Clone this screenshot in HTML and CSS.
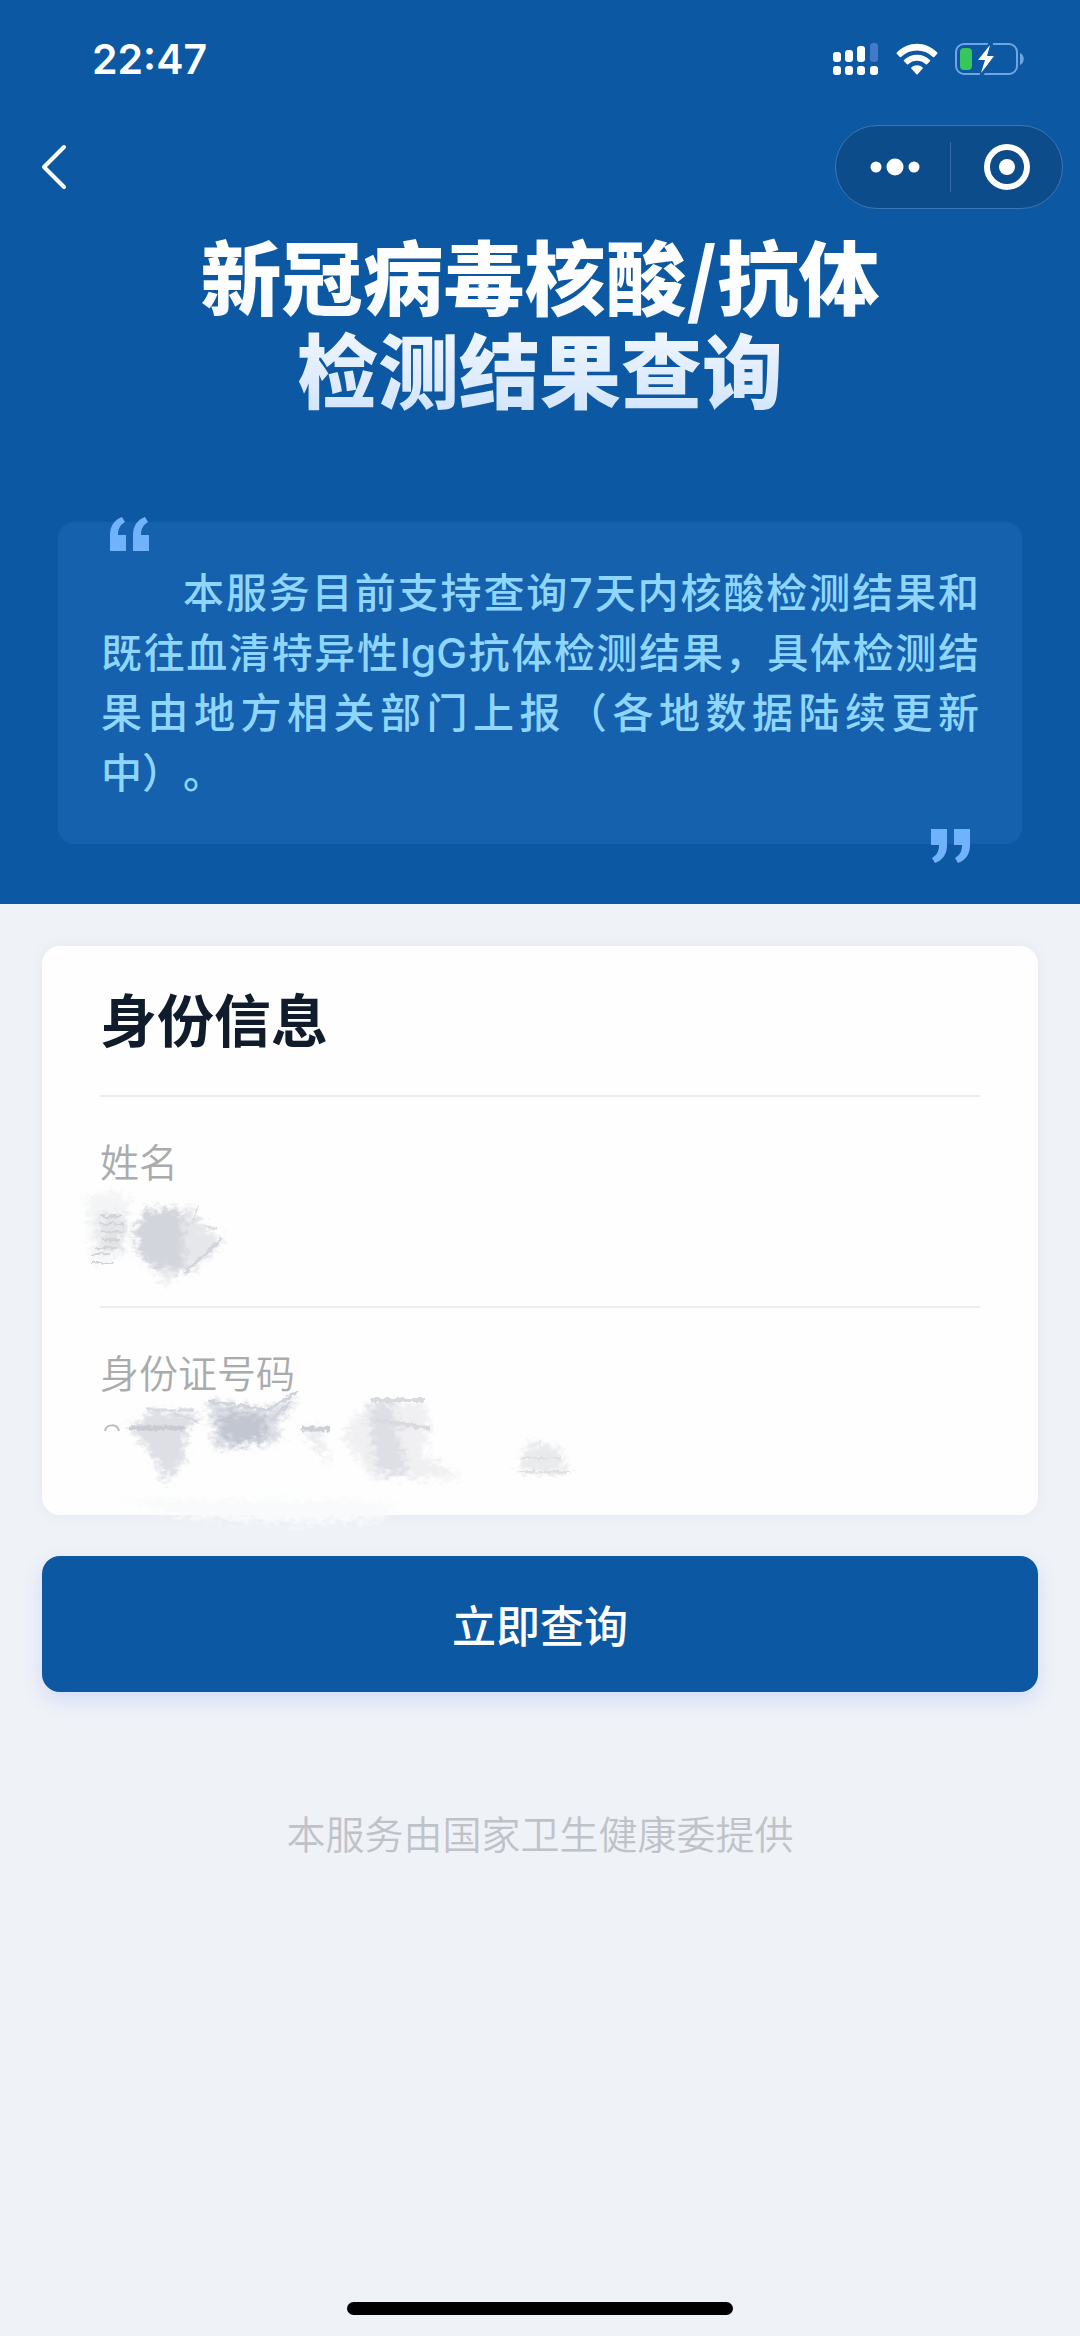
FILE: index.html
```html
<!DOCTYPE html>
<html lang="zh-CN">
<head>
<meta charset="utf-8">
<meta name="viewport" content="width=device-width, initial-scale=1">
<title>新冠病毒核酸/抗体检测结果查询</title>
<link rel="stylesheet" href="styles.css">
</head>
<body>
<div class="page">
  <header class="hero">
    <div class="status-bar">
      <time class="clock">22:47</time>
      <div class="status-icons">
        <svg width="46" height="34" viewBox="0 0 46 34" fill="#fff" aria-hidden="true">
          <rect x="0" y="10" width="8" height="10" rx="3"/>
          <rect x="12" y="8" width="8" height="12" rx="3"/>
          <rect x="24" y="4" width="8" height="16" rx="3"/>
          <rect x="37" y="1" width="8" height="19" rx="3" fill="#4478c8"/>
          <rect x="0" y="24" width="8" height="9" rx="3"/>
          <rect x="12" y="24" width="8" height="9" rx="3"/>
          <rect x="24" y="24" width="8" height="9" rx="3"/>
          <rect x="37" y="24" width="8" height="9" rx="3"/>
        </svg>
        <svg width="42" height="34" viewBox="0 0 42 34" fill="#fff" aria-hidden="true">
          <path d="M.8 10.6C12-1.200 30-1.200 41.200 10.600c.4.4.4.8 0 1.200l-3 3.100c-.4.4-.8.4-1.200 0C28 6.300 14 6.300 5 14.900c-.4.4-.8.4-1.200 0l-3-3.100c-.4-.4-.4-.8 0-1.200z"/>
          <path d="M8 18c7.400-6.900 18.600-6.900 26 0 .4.400.4.800 0 1.200l-3 3c-.4.400-.8.400-1.200 0-5.200-4.600-12.400-4.600-17.600 0-.4.400-.8.400-1.200 0l-3-3c-.4-.4-.4-.8 0-1.200z"/>
          <path d="M15.400 25.400c3.300-2.800 7.900-2.800 11.200 0 .5.400.5.800.1 1.200l-5.100 5.600c-.4.400-.8.400-1.200 0l-5.100-5.600c-.4-.4-.4-.8.1-1.200z"/>
        </svg>
        <svg width="70" height="34" viewBox="0 0 70 34" aria-hidden="true">
          <rect x="1" y="2" width="61" height="30" rx="8" fill="none" stroke="#6fa5e3" stroke-width="2"/>
          <rect x="5" y="6" width="12" height="22" rx="4" fill="#35c759"/>
          <path d="M65 11c5 2 5 10 0 12z" fill="#6fa5e3"/>
          <path d="M36 0 23 19h7l-4 15 14-20h-7l4-14z" fill="#fff" stroke="#0d59a3" stroke-width="3"/>
          <path d="M35 3 23 18h7l-4 13 13-17h-7z" fill="#fff"/>
        </svg>
      </div>
    </div>
    <nav class="nav-bar">
      <button class="back" type="button" aria-label="返回">
        <svg width="26" height="46" viewBox="0 0 26 46" fill="none" stroke="#fff" stroke-width="4" stroke-linecap="round" stroke-linejoin="round"><path d="M23 3 3 23l20 20"/></svg>
      </button>
      <div class="capsule">
        <button class="capsule-button" type="button" aria-label="更多">
          <svg width="50" height="18" viewBox="0 0 50 18" fill="#fff"><circle cx="6" cy="9" r="5.500"/><circle cx="25" cy="9" r="8.500"/><circle cx="44" cy="9" r="5.500"/></svg>
        </button>
        <button class="capsule-button" type="button" aria-label="关闭">
          <svg width="46" height="46" viewBox="0 0 46 46"><circle cx="23" cy="23" r="20" fill="none" stroke="#fff" stroke-width="6"/><circle cx="23" cy="23" r="8" fill="#fff"/></svg>
        </button>
      </div>
    </nav>
    <h1 class="title">新冠病毒核酸/抗体<br>检测结果查询</h1>
    <div class="notice">
      <svg class="quote quote-open" width="40" height="34" viewBox="0 0 40 34" aria-hidden="true"><path id="quote-mark" d="M1 34V18C1 9 5 3 13 0l3 5c-5 3-7 7-7 13h8v16zM24 34V18c0-9 4-15 12-18l3 5c-5 3-7 7-7 13h8v16z"/></svg>
      <p class="notice-text">本服务目前支持查询7天内核酸检测结果和既往血清特异性IgG抗体检测结果，具体检测结果由地方相关部门上报（各地数据陆续更新中）。</p>
      <svg class="quote quote-close" width="40" height="34" viewBox="0 0 40 34" aria-hidden="true"><use href="#quote-mark" transform="rotate(180 20 17)"/></svg>
    </div>
  </header>

  <main class="content">
    <section class="card">
      <h2 class="card-title">身份信息</h2>
      <div class="field">
        <span class="field-label">姓名</span>
        <svg class="smudge" width="140" height="110" viewBox="0 0 140 110" aria-hidden="true">
          <defs>
            <filter id="rough" x="-20%" y="-20%" width="140%" height="140%">
              <feTurbulence type="fractalNoise" baseFrequency="0.14 0.2" numOctaves="3" seed="4" result="noise"/>
              <feGaussianBlur in="SourceGraphic" stdDeviation="3" result="soft"/>
              <feDisplacementMap in="soft" in2="noise" scale="20" xChannelSelector="R" yChannelSelector="G"/>
            </filter>
            <filter id="grain" x="-20%" y="-20%" width="140%" height="140%">
              <feTurbulence type="fractalNoise" baseFrequency="0.2" numOctaves="2" seed="9" result="noise"/>
              <feDisplacementMap in="SourceGraphic" in2="noise" scale="6" xChannelSelector="R" yChannelSelector="G"/>
            </filter>
          </defs>
          <g filter="url(#rough)">
            <path d="M-14 6 24 0l6 18-6 48-32 6z" fill="#f3f4f5"/>
            <path d="M-2 24h26l-2 32-20 6z" fill="#e2e3e6"/>
            <path d="m44 20 24-4 22 6 12 12 4 20-14 20-18 12-18-6-18-16-4-22z" fill="#d3d5dc"/>
            <path d="m84 16 10 2-2 12 14 8 18 10-32 34-8-10z" fill="#e6e7eb"/>
            <path d="m56 78 20 0-10 18z" fill="#ecedf0"/>
          </g>
          <g filter="url(#grain)" fill="none">
            <path d="M0 25h22M0 33h24M0 41h24M2 49h18M-6 57h22M-8 63h18M-8 72h22" stroke="#d3d4d8" stroke-width="2"/>
            <path d="m122 47-38 36" stroke="#d3d5db" stroke-width="3"/>
            <path d="M98 14 92 34M104 34l12 4" stroke="#dcdee2" stroke-width="2"/>
          </g>
        </svg>
      </div>
      <div class="field">
        <span class="field-label">身份证号码</span>
        <svg class="smudge" width="500" height="110" viewBox="0 0 500 110" aria-hidden="true">
          <path d="M5 29c1-7 12-8 14 0" fill="none" stroke="#b9bbc0" stroke-width="2"/>
          <g filter="url(#rough)">
            <path d="m46 8 54 4-12 14-4 32-18 24-14-28-24-32 20-4z" fill="#dddfe5"/>
            <path d="m108-1 62 8 28-12-22 30 6 14-28 4-38 6-4-24z" fill="#dcdee5"/>
            <path d="m118 10 50 2-4 26-28 4-16-8z" fill="#c2c6d1"/>
            <path d="M202 26h30l-12 6 10 34-22-30z" fill="#eaebee"/>
            <path d="m250 20 20-20 56 0 4 28-8 24 40 24H272l-28-38z" fill="#f0f0f3"/>
            <path d="m270 0 24 2 4 28 6 24 4 16-30 2-8-42z" fill="#dddfe5"/>
            <path d="m428 40 30 4 10 28-50-2z" fill="#e9eaec"/>
            <path d="m20 98 220 0 60 4-20 16-70 4-120-6z" fill="#f8fafc"/>
          </g>
          <g filter="url(#grain)" fill="none">
            <path d="M30 26h54" stroke="#c9cbd3" stroke-width="5"/>
            <path d="M46 8h48M74 12l24 8" stroke="#d8dae0" stroke-width="3"/>
            <path d="m108-1 60 9 30-18M170 20l20-20" stroke="#d0d3db" stroke-width="3"/>
            <path d="M202 27h28" stroke="#cccfd6" stroke-width="5"/>
            <path d="M270-2h54M276 18l54 8" stroke="#d8dae0" stroke-width="4"/>
            <path d="M422 56h40M418 70h54" stroke="#e0e1e4" stroke-width="2"/>
          </g>
        </svg>
      </div>
    </section>
    <button class="submit" type="button">立即查询</button>
    <p class="provider">本服务由国家卫生健康委提供</p>
  </main>
  <div class="home-indicator"></div>
</div>
</body>
</html>
```
FILE: styles.css
```css
* {
  box-sizing: border-box;
}

body {
  margin: 0;
  background: #eff2f7;
  font-family: Inter, "Noto Sans CJK SC", sans-serif;
  color: #101b2b;
}

button {
  margin: 0;
  padding: 0;
  border: 0;
  background: none;
  font: inherit;
  color: inherit;
  cursor: pointer;
}

svg {
  display: block;
  flex: none;
}

.page {
  display: flex;
  flex-direction: column;
  min-height: 100vh;
}

.hero {
  padding-bottom: 60px;
  background: #0c58a3;
  color: #fff;
}

.status-bar {
  display: flex;
  align-items: center;
  justify-content: space-between;
  height: 117px;
  padding: 0 55px 0 92px;
}

.clock {
  font-size: 41px;
  font-weight: 600;
  line-height: 50px;
}

.status-icons {
  display: flex;
  align-items: center;
  gap: 17px;
}

.nav-bar {
  display: flex;
  align-items: center;
  justify-content: space-between;
  height: 100px;
  padding: 0 17px 0 41px;
}

.capsule {
  display: flex;
  align-items: center;
  width: 228px;
  height: 84px;
  padding-left: 3px;
  border: 1px solid #3a76b4;
  border-radius: 42px;
  background: #0d4c8a;
}

.capsule-button {
  display: flex;
  flex: 1;
  align-items: center;
  justify-content: center;
  height: 50px;
}

.capsule-button + .capsule-button {
  border-left: 1px solid #346ba4;
}

.title {
  margin: 10px 0 0;
  font-size: 81px;
  font-weight: 900;
  line-height: 93px;
  text-align: center;
  font-family: "Noto Sans CJK SC", sans-serif;
  color: transparent;
  background: linear-gradient(#fff 30%, #d3e5fc);
  background-clip: text;
  -webkit-background-clip: text;
}

.notice {
  position: relative;
  margin: 109px 58px 0;
  padding: 41px 43px;
  border-radius: 16px;
  background: #1661ae;
}

.notice-text {
  margin: 0;
  font-size: 41px;
  font-weight: 500;
  line-height: 60px;
  text-indent: 2em;
  text-align: justify;
  text-spacing-trim: space-all;
  color: #8fd6ff;
}

.quote {
  position: absolute;
  fill: #70b2fb;
}

.quote-open {
  top: -5px;
  left: 51px;
}

.quote-close {
  right: 51px;
  bottom: -19px;
}

.content {
  padding: 42px 42px 0;
}

.card {
  padding: 0 58px;
  border-radius: 18px;
  background: #fefefe;
  box-shadow: 0 0 16px rgba(40, 70, 110, 0.05);
}

.card-title {
  margin: 0;
  padding: 36px 0 33px;
  border-bottom: 2px solid #ededee;
  font-size: 57px;
  font-weight: 700;
  line-height: 80px;
}

.field {
  padding: 38px 0 5px;
}

.field + .field {
  padding-bottom: 3px;
}

.field:not(:last-child) {
  border-bottom: 2px solid #ededee;
}

.field-label {
  display: block;
  font-size: 39px;
  font-weight: 350;
  line-height: 56px;
  color: #aaabad;
}

.smudge {
  overflow: visible;
}

.submit {
  display: block;
  width: 100%;
  height: 136px;
  margin-top: 41px;
  border-radius: 18px;
  background: #0c58a3;
  box-shadow: 0 8px 20px rgba(90, 120, 255, 0.18);
  font-size: 44px;
  font-weight: 500;
  color: #fff;
}

.provider {
  margin: 115px 0 0;
  font-size: 39px;
  font-weight: 350;
  line-height: 56px;
  text-align: center;
  color: #bfc3c9;
}

.home-indicator {
  width: 386px;
  height: 13px;
  margin: auto auto 21px;
  border-radius: 7px;
  background: #000;
}
```
